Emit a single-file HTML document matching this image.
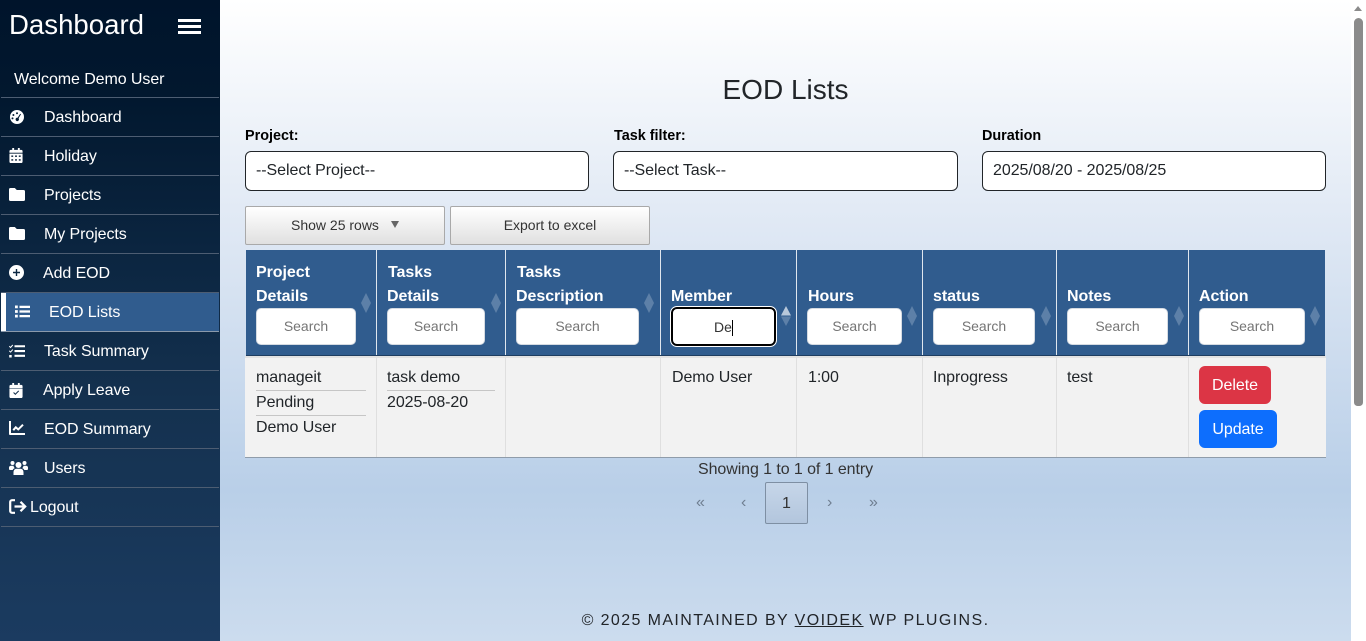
<!DOCTYPE html>
<html lang="en"><head><meta charset="utf-8"><title>EOD Lists</title>
<style>
*{box-sizing:border-box}
html,body{margin:0;padding:0;width:1366px;height:641px;overflow:hidden;font-family:"Liberation Sans",sans-serif;color:#212529}
#main{position:absolute;left:220px;top:0;width:1131px;height:641px;background:linear-gradient(180deg,#fff 0,#dfe8f4 230px,#b9cfe8 490px,#ccdcee 641px)}
#side{position:absolute;left:0;top:0;width:220px;height:641px;background:linear-gradient(180deg,#00142b 0,#02182f 100px,#0b2540 250px,#14314f 400px,#1b3b60 641px)}
.a{position:absolute;white-space:nowrap}
.ln{position:absolute;left:1px;width:218px;height:1px;background:#4d5d72}
.mi{position:absolute;color:#fff;font-size:16px;line-height:20px;white-space:nowrap;letter-spacing:-.08px;margin-top:1px}
.ic{position:absolute;fill:#fff}
.lab{position:absolute;font-weight:bold;font-size:14.4px;color:#000;line-height:18px;white-space:nowrap;margin-top:1px}
.sel{position:absolute;top:151px;height:40px;background:#fff;border:1px solid #212529;border-radius:6px;font-size:16px;line-height:38px;padding-left:10px;color:#212529;white-space:nowrap;letter-spacing:-.05px}
.btn{position:absolute;top:206px;width:200px;height:39px;border:1px solid #a9a9a9;border-radius:2px;background:linear-gradient(180deg,#fff,#e0e0e0);font-size:14px;line-height:37px;text-align:center;color:#333}
.th{position:absolute;top:250px;height:106px;background:#305c8e;border-right:1px solid #dfe6ee}
.hd{position:absolute;color:#fff;font-weight:bold;font-size:16px;line-height:24px;white-space:nowrap;margin-top:2px;letter-spacing:-.05px}
.sr{position:absolute;top:308px;height:37px;background:#fff;border:1px solid #d5dbe2;border-radius:5px;text-align:center;font-size:14px;line-height:35px;color:#757575}
.dm{position:absolute;top:293px;width:10px;height:20px;fill:#5d80a8}
.td{position:absolute;top:356px;height:101px;background:#f2f2f2;border-right:1px solid #dfdfdf;border-top:2px solid #e2e2e2}
.tx{position:absolute;font-size:16px;line-height:20px;color:#212529;white-space:nowrap;margin-top:1px;letter-spacing:-.08px}
.hr{position:absolute;height:1px;background:#c6c6c6}
.b{position:absolute;border-radius:6px;color:#fff;font-size:16px;line-height:38px;text-align:center;padding-top:1px;letter-spacing:-.05px}
.pg{position:absolute;top:494px;font-size:16px;line-height:18px;color:#6f7e90}
</style></head><body>
<div id="main"></div>
<div id="side"></div>

<div class="a" style="left:9px;top:9px;font-size:27.6px;line-height:32px;color:#fff">Dashboard</div>
<div class="a" style="left:178px;top:19px;width:23px;height:3px;background:#fff"></div>
<div class="a" style="left:178px;top:25px;width:23px;height:3px;background:#fff"></div>
<div class="a" style="left:178px;top:31px;width:23px;height:3px;background:#fff"></div>
<div class="mi" style="left:14px;top:69px">Welcome Demo User</div>

<div class="ln" style="top:97px"></div><div class="ln" style="top:136px"></div><div class="ln" style="top:175px"></div><div class="ln" style="top:214px"></div><div class="ln" style="top:253px"></div><div class="ln" style="top:292px"></div><div class="ln" style="top:331px;background:#8a99ab"></div><div class="ln" style="top:370px"></div><div class="ln" style="top:409px"></div><div class="ln" style="top:448px"></div><div class="ln" style="top:487px"></div><div class="ln" style="top:526px"></div>

<div class="a" style="left:1px;top:293px;width:218px;height:38px;background:#305c8e"></div>
<div class="a" style="left:1px;top:293px;width:5px;height:38px;background:#fff"></div>

<svg class="ic" style="left:9px;top:109px" width="16" height="16" viewBox="0 0 16 16"><path fill-rule="evenodd" d="M8 1a7 7 0 1 1 0 14A7 7 0 0 1 8 1zM8 3.200a1 1 0 1 0 0 2 1 1 0 0 0 0-2zM4.400 5a1 1 0 1 0 0 2 1 1 0 0 0 0-2zM3.500 8.400a1 1 0 1 0 0 2 1 1 0 0 0 0-2zM11.200 4.800 8.600 8.700a1.700 1.700 0 1 0 1 .6l2.400-4z"/></svg>
<div class="mi" style="left:44px;top:107px">Dashboard</div>

<svg class="ic" style="left:9px;top:148px" width="14" height="15" viewBox="0 0 14 16"><path fill-rule="evenodd" d="M3 0h2v2h4V0h2v2h1.500A1.500 1.500 0 0 1 14 3.500V5H0V3.500A1.500 1.500 0 0 1 1.500 2H3zM0 6h14v8.500a1.500 1.500 0 0 1-1.500 1.500h-11A1.500 1.500 0 0 1 0 14.500zM2 8v1.500h2V8zm4 0v1.500h2V8zm4 0v1.500h2V8zM2 12v1.500h2V12zm4 0v1.500h2V12zm4 0v1.500h2V12z"/></svg>
<div class="mi" style="left:44px;top:146px">Holiday</div>

<svg class="ic" style="left:9px;top:188px" width="16" height="13" viewBox="0 0 16 13"><path d="M1.500 0h4.300l2 2h6.700A1.500 1.500 0 0 1 16 3.500v8a1.500 1.500 0 0 1-1.500 1.500h-13A1.500 1.500 0 0 1 0 11.500v-10A1.500 1.500 0 0 1 1.500 0z"/></svg>
<div class="mi" style="left:44px;top:185px">Projects</div>

<svg class="ic" style="left:9px;top:227px" width="16" height="13" viewBox="0 0 16 13"><path d="M1.500 0h4.300l2 2h6.700A1.500 1.500 0 0 1 16 3.500v8a1.500 1.500 0 0 1-1.500 1.500h-13A1.500 1.500 0 0 1 0 11.500v-10A1.500 1.500 0 0 1 1.500 0z"/></svg>
<div class="mi" style="left:44px;top:224px">My Projects</div>

<svg class="ic" style="left:9px;top:265px" width="15" height="15" viewBox="0 0 15 15"><path fill-rule="evenodd" d="M7.500 0a7.500 7.500 0 1 1 0 15 7.500 7.500 0 0 1 0-15zM6.800 4v2.800H4v1.400h2.800V11h1.400V8.200H11V6.800H8.200V4z"/></svg>
<div class="mi" style="left:43px;top:263px">Add EOD</div>

<svg class="ic" style="left:15px;top:305px" width="15" height="13" viewBox="0 0 15 13"><path d="M0 .5h2.800v2.800H0zM4.500 .8H15v2.200H4.500zM0 5.100h2.800v2.800H0zM4.500 5.400H15v2.200H4.500zM0 9.700h2.800v2.800H0zM4.500 10H15v2.200H4.500z"/></svg>
<div class="mi" style="left:49px;top:302px">EOD Lists</div>

<svg class="ic" style="left:9px;top:344px" width="16" height="14" viewBox="0 0 16 14"><path d="M5.500 1.200H16v2.100H5.500zM5.500 6H16v2.100H5.500zM5.500 10.800H16v2.100H5.500zM.5 1.800l1 1L3.400.6l.8.7L1.600 4.200 0 2.600zM.5 6.400l1 1 1.900-2.200.8.7-2.600 2.900L0 7.200zM.2 11h2.500v2.500H.2z"/></svg>
<div class="mi" style="left:44px;top:341px">Task Summary</div>

<svg class="ic" style="left:9px;top:383px" width="14" height="15" viewBox="0 0 14 16"><path fill-rule="evenodd" d="M3 0h2v2h4V0h2v2h1.500A1.500 1.500 0 0 1 14 3.500V5.500H0v-2A1.500 1.500 0 0 1 1.500 2H3zM0 6h14v8.500a1.500 1.500 0 0 1-1.500 1.500h-11A1.500 1.500 0 0 1 0 14.500zM4 10.500l2.300 2.300 4-4-.8-.8-3.200 3.200-1.500-1.500z"/></svg>
<div class="mi" style="left:43px;top:380px">Apply Leave</div>

<svg class="ic" style="left:9px;top:421px" width="16" height="14" viewBox="0 0 16 14"><path d="M0 0h2v12h14v2H1a1 1 0 0 1-1-1zM3.500 8.500l3.200-3.600 2.500 2.200L13.300 3 14.700 4.400 9.300 9.800 6.900 7.700 5 9.900z"/></svg>
<div class="mi" style="left:44px;top:419px">EOD Summary</div>

<svg class="ic" style="left:9px;top:460px" width="19" height="15" viewBox="0 0 19 15"><circle cx="9.500" cy="5" r="3"/><circle cx="3.500" cy="3" r="2"/><circle cx="15.500" cy="3" r="2"/><path d="M4.500 15v-2.500C4.500 10 6 8.800 7.500 8.800h4c1.500 0 3 1.200 3 3.700V15zM0 9V7.500C0 6.300 1 5.700 2 5.700h2.500c.2 1 .6 1.800 1.300 2.400C4.700 8.500 4 9 3.700 10H1a1 1 0 0 1-1-1zM19 9V7.500c0-1.200-1-1.800-2-1.800h-2.500c-.2 1-.6 1.800-1.300 2.400 1.100.4 1.800.9 2.100 1.900H18a1 1 0 0 0 1-1z"/></svg>
<div class="mi" style="left:44px;top:458px">Users</div>

<svg class="a" style="left:9px;top:499px" width="18" height="15" viewBox="0 0 18 15"><path d="M6 1.200H3A1.800 1.800 0 0 0 1.200 3v9A1.800 1.800 0 0 0 3 13.800h3" fill="none" stroke="#fff" stroke-width="2.200"/><path d="M5.500 7.500h10M11.500 2.800l4.700 4.700-4.700 4.700" fill="none" stroke="#fff" stroke-width="2.200"/></svg>
<div class="mi" style="left:30px;top:497px">Logout</div>

<div class="a" style="left:220px;top:73px;width:1131px;text-align:center;font-size:28px;line-height:34px;color:#212529">EOD Lists</div>

<div class="lab" style="left:245px;top:126px">Project:</div>
<div class="lab" style="left:614px;top:126px">Task filter:</div>
<div class="lab" style="left:982px;top:126px">Duration</div>
<div class="sel" style="left:245px;width:344px">--Select Project--</div>
<div class="sel" style="left:613px;width:345px">--Select Task--</div>
<div class="sel" style="left:982px;width:344px">2025/08/20 - 2025/08/25</div>

<div class="btn" style="left:245px;text-align:left;padding-left:45px">Show 25 rows</div>
<div class="a" style="left:391px;top:221px;width:0;height:0;border-left:4px solid transparent;border-right:4px solid transparent;border-top:7px solid #666"></div>
<div class="btn" style="left:450px">Export to excel</div>

<div class="th" style="left:246px;width:131px"></div>
<div class="th" style="left:377px;width:129px"></div>
<div class="th" style="left:506px;width:155px"></div>
<div class="th" style="left:661px;width:136px"></div>
<div class="th" style="left:797px;width:126px"></div>
<div class="th" style="left:923px;width:134px"></div>
<div class="th" style="left:1057px;width:132px"></div>
<div class="th" style="left:1189px;width:136px;border-right:0"></div>
<div class="a" style="left:246px;top:355px;width:1079px;height:1px;background:#1e3d60"></div>

<div class="hd" style="left:256px;top:259px">Project</div><div class="hd" style="left:256px;top:283px">Details</div>
<div class="hd" style="left:388px;top:259px">Tasks</div><div class="hd" style="left:387px;top:283px">Details</div>
<div class="hd" style="left:517px;top:259px">Tasks</div><div class="hd" style="left:516px;top:283px">Description</div>
<div class="hd" style="left:671px;top:283px">Member</div>
<div class="hd" style="left:808px;top:283px">Hours</div>
<div class="hd" style="left:933px;top:283px">status</div>
<div class="hd" style="left:1067px;top:283px">Notes</div>
<div class="hd" style="left:1199px;top:283px">Action</div>

<div class="sr" style="left:256px;width:100px">Search</div>
<div class="sr" style="left:387px;width:98px">Search</div>
<div class="sr" style="left:516px;width:123px">Search</div>
<div class="a" style="left:671px;top:307px;width:105px;height:39px;background:#fff;border:2px solid #000;outline:1px solid #fff;border-radius:6px;font-size:14px;line-height:36px;text-align:center;color:#333">De<span style="display:inline-block;width:1px;height:16px;background:#000;vertical-align:middle"></span></div>
<div class="sr" style="left:807px;width:95px">Search</div>
<div class="sr" style="left:933px;width:102px">Search</div>
<div class="sr" style="left:1067px;width:101px">Search</div>
<div class="sr" style="left:1199px;width:106px">Search</div>

<svg class="dm" style="left:361px" viewBox="0 0 10 20"><path d="M5 0l5 10-5 10-5-10z"/></svg>
<svg class="dm" style="left:491px" viewBox="0 0 10 20"><path d="M5 0l5 10-5 10-5-10z"/></svg>
<svg class="dm" style="left:644px" viewBox="0 0 10 20"><path d="M5 0l5 10-5 10-5-10z"/></svg>
<svg class="dm" style="left:781px;top:306px" viewBox="0 0 10 20"><path d="M5 0l5 9.500H0z" fill="#b8c8da"/><path d="M0 10.500h10L5 20z"/></svg>
<svg class="dm" style="left:907px;top:306px" viewBox="0 0 10 20"><path d="M5 0l5 10-5 10-5-10z"/></svg>
<svg class="dm" style="left:1041px;top:306px" viewBox="0 0 10 20"><path d="M5 0l5 10-5 10-5-10z"/></svg>
<svg class="dm" style="left:1174px;top:306px" viewBox="0 0 10 20"><path d="M5 0l5 10-5 10-5-10z"/></svg>
<svg class="dm" style="left:1310px;top:306px" viewBox="0 0 10 20"><path d="M5 0l5 10-5 10-5-10z"/></svg>

<div class="td" style="left:245px;width:132px"></div>
<div class="td" style="left:377px;width:129px"></div>
<div class="td" style="left:506px;width:155px"></div>
<div class="td" style="left:661px;width:136px"></div>
<div class="td" style="left:797px;width:126px"></div>
<div class="td" style="left:923px;width:134px"></div>
<div class="td" style="left:1057px;width:132px"></div>
<div class="td" style="left:1189px;width:137px;border-right:0"></div>
<div class="a" style="left:245px;top:457px;width:1081px;height:1px;background:#8f9caa"></div>

<div class="tx" style="left:256px;top:367px">manageit</div>
<div class="hr" style="left:256px;top:390px;width:110px"></div>
<div class="tx" style="left:256px;top:392px">Pending</div>
<div class="hr" style="left:256px;top:415px;width:110px"></div>
<div class="tx" style="left:256px;top:417px">Demo User</div>
<div class="tx" style="left:387px;top:367px">task demo</div>
<div class="hr" style="left:387px;top:390px;width:108px"></div>
<div class="tx" style="left:387px;top:392px">2025-08-20</div>
<div class="tx" style="left:672px;top:367px">Demo User</div>
<div class="tx" style="left:808px;top:367px">1:00</div>
<div class="tx" style="left:933px;top:367px">Inprogress</div>
<div class="tx" style="left:1067px;top:367px">test</div>
<div class="b" style="left:1199px;top:366px;width:72px;height:38px;background:#dc3545">Delete</div>
<div class="b" style="left:1199px;top:410px;width:78px;height:38px;background:#0d6efd">Update</div>

<div class="a" style="left:220px;top:460px;width:1131px;text-align:center;font-size:16px;line-height:20px;color:#333;letter-spacing:-.08px;padding-top:0;margin-top:0">Showing 1 to 1 of 1 entry</div>
<div class="pg" style="left:696px">«</div>
<div class="pg" style="left:741px">‹</div>
<div class="a" style="left:765px;top:482px;width:43px;height:42px;border:1px solid #7e8fa3;border-radius:2px;background:linear-gradient(180deg,#c6d6e9,#b3c6dd);text-align:center;font-size:16px;line-height:42px;color:#333">1</div>
<div class="pg" style="left:827px">›</div>
<div class="pg" style="left:869px">»</div>

<div class="a" style="left:220px;top:611px;width:1131px;text-align:center;font-size:16px;line-height:20px;letter-spacing:1.400px;color:#212529">© 2025 MAINTAINED BY <span style="text-decoration:underline">VOIDEK</span> WP PLUGINS.</div>

<div class="a" style="left:1351px;top:0;width:15px;height:641px;background:#fff"></div>
<div class="a" style="left:1354px;top:18px;width:9px;height:388px;background:#8b8b8b;border-radius:5px 5px 4px 4px"></div>
<div class="a" style="left:1354px;top:6px;width:0;height:0;border-left:4.500px solid transparent;border-right:4.500px solid transparent;border-bottom:5px solid #8b8b8b"></div>
</body></html>
